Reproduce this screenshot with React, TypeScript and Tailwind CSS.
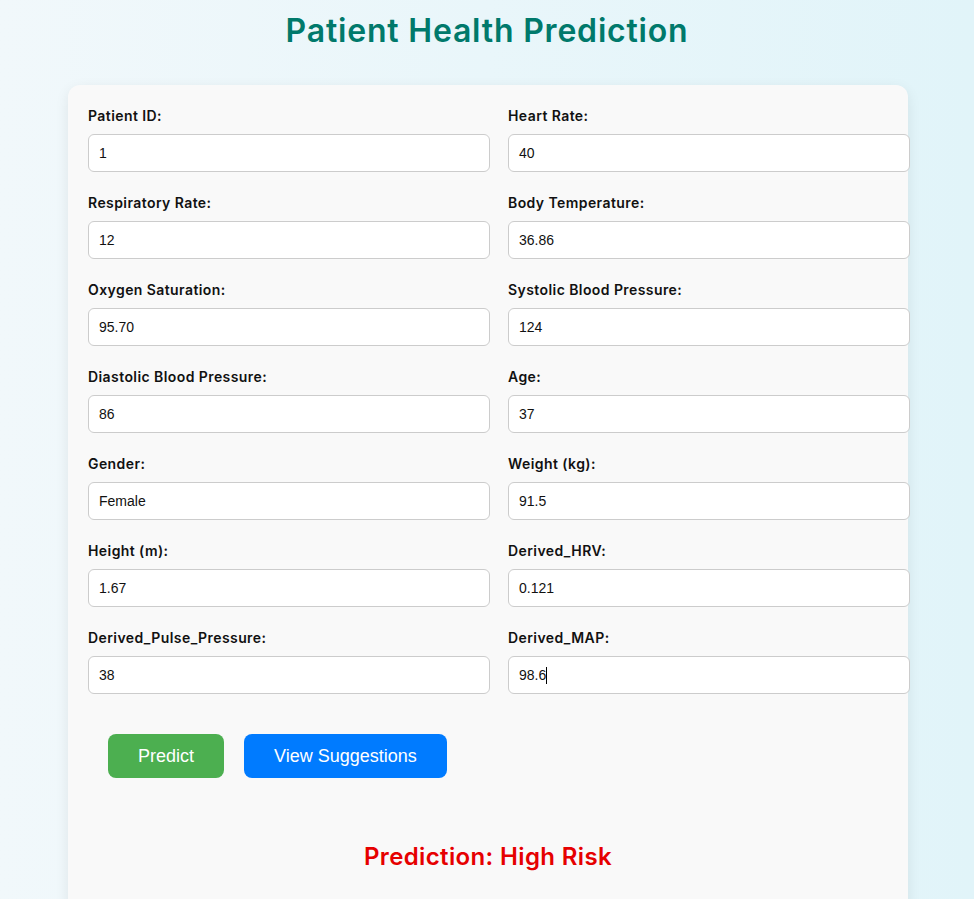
const fields: [string, string][] = [
  ['Patient ID:', '1'],
  ['Heart Rate:', '40'],
  ['Respiratory Rate:', '12'],
  ['Body Temperature:', '36.86'],
  ['Oxygen Saturation:', '95.70'],
  ['Systolic Blood Pressure:', '124'],
  ['Diastolic Blood Pressure:', '86'],
  ['Age:', '37'],
  ['Gender:', 'Female'],
  ['Weight (kg):', '91.5'],
  ['Height (m):', '1.67'],
  ['Derived_HRV:', '0.121'],
  ['Derived_Pulse_Pressure:', '38'],
  ['Derived_MAP:', '98.6'],
];

function Field({ label, value, caret }: { label: string; value: string; caret?: boolean }) {
  return (
    <div className="mb-[20px]">
      <p className="text-[14px] leading-[21px] font-semibold tracking-[0.03em] text-[#111] mb-[8px] font-['Inter',sans-serif]">{label}</p>
      <div className="h-[38px] w-[402px] bg-white border border-[#cccccc] rounded-[6px] px-[10px] flex items-center text-[14px] text-[#111] font-['Liberation_Sans',Arial,sans-serif]">
        <span>{value}</span>
        {caret && <span className="w-px h-[17px] bg-black" />}
      </div>
    </div>
  );
}

export default function App() {
  return (
    <div className="h-[899px] bg-linear-to-r from-[#f1f8fb] to-[#e1f4f9] overflow-hidden">
      <h1 className="pt-[7px] text-center text-[32px] leading-[48px] font-semibold tracking-[0.025em] text-[#00796b] font-['Inter',sans-serif]">
        Patient Health Prediction
      </h1>
      <div className="mt-[30px] ml-[68px] w-[840px] h-[900px] bg-[#f9f9f9] rounded-[12px] shadow-[0_4px_14px_rgba(0,0,0,0.08)] pt-[20px] pl-[20px]">
        <div className="grid grid-cols-[402px_402px] gap-x-[18px]">
          {fields.map(([l, v], i) => (
            <Field key={l} label={l} value={v} caret={i === fields.length - 1} />
          ))}
        </div>
        <div className="flex gap-[20px] pl-[20px] mt-[20px]">
          <button className="h-[44px] w-[116px] rounded-[8px] bg-[#4caf50] text-white text-[18px] font-['Liberation_Sans',Arial,sans-serif]">
            Predict
          </button>
          <button className="h-[44px] w-[203px] rounded-[8px] bg-[#007bff] text-white text-[18px] font-['Liberation_Sans',Arial,sans-serif]">
            View Suggestions
          </button>
        </div>
        <p className="mt-[61px] pr-[20px] text-center text-[24px] leading-[36px] font-semibold tracking-[0.015em] text-[#e60000] font-['Inter',sans-serif]">
          Prediction: High Risk
        </p>
      </div>
    </div>
  );
}
